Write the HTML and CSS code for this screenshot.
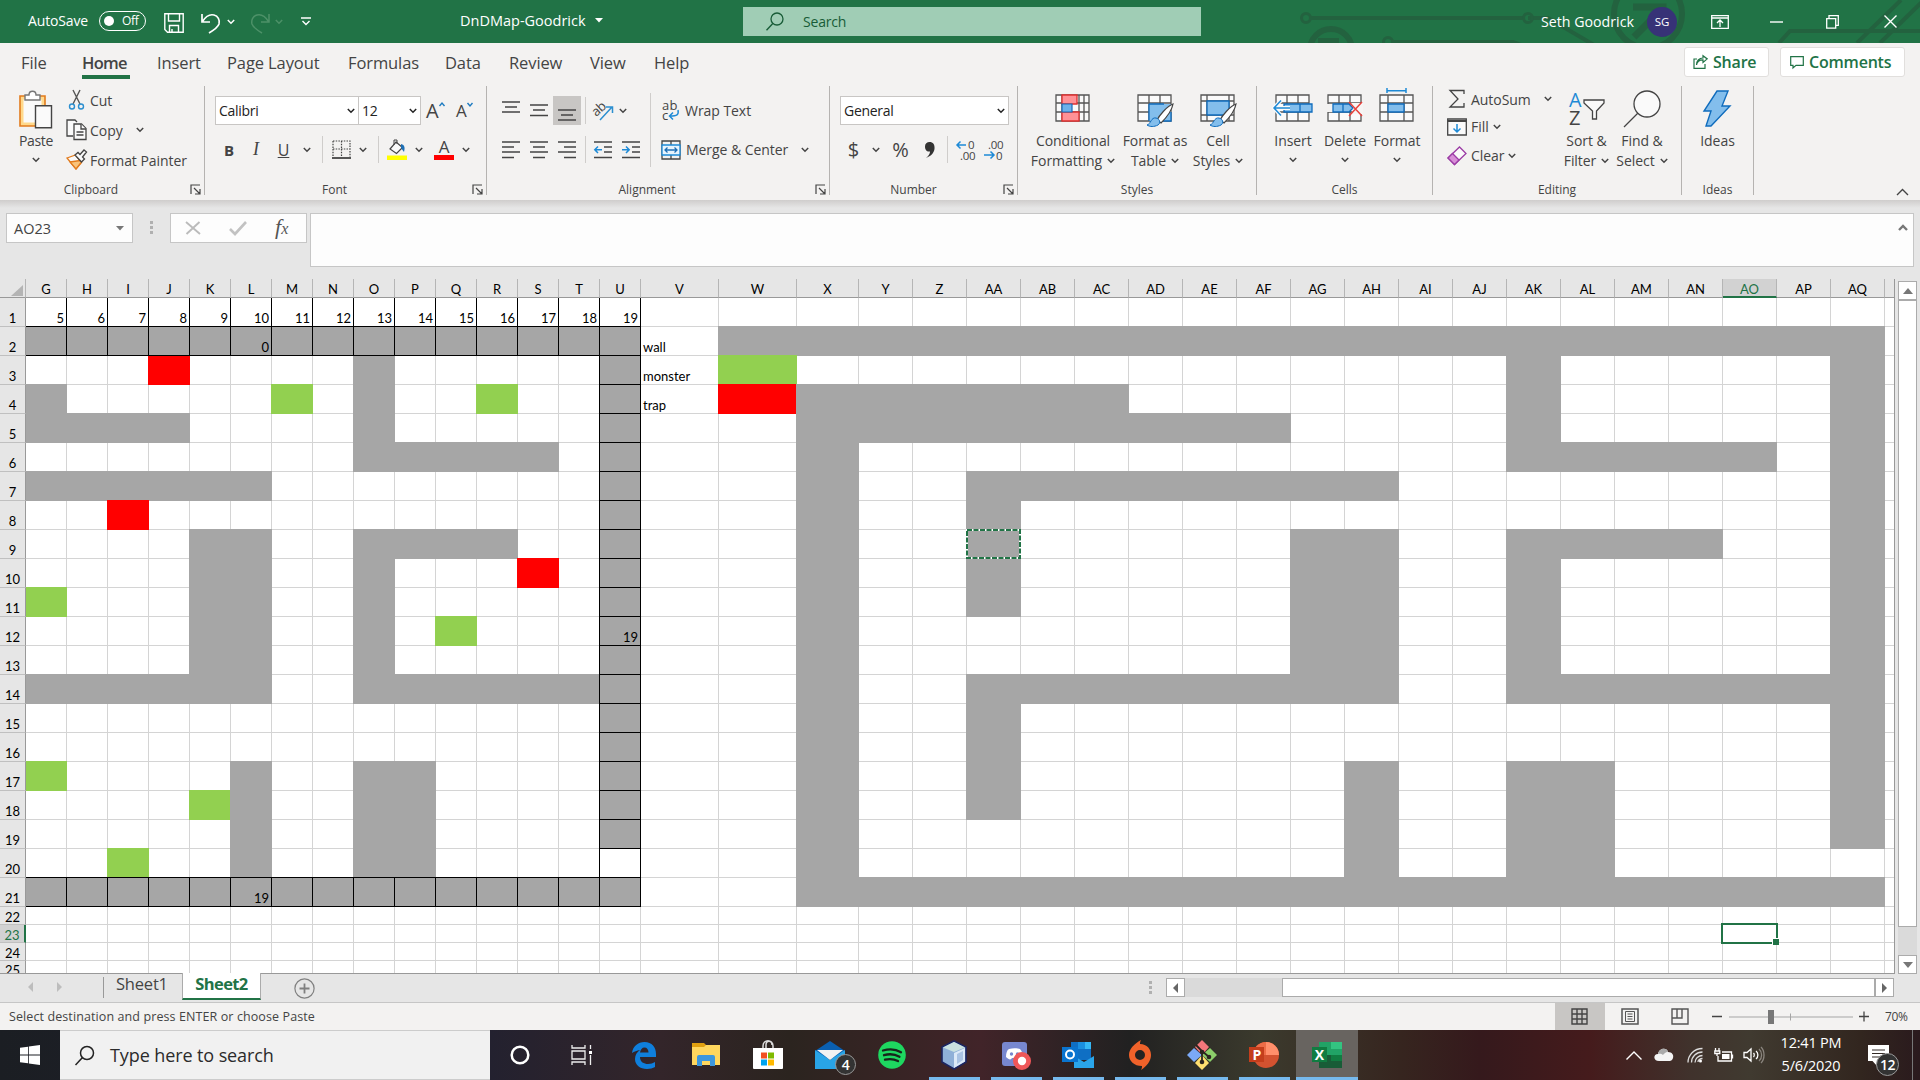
FILE: index.html
```html
<!DOCTYPE html>
<html lang="en">
<head>
<meta charset="utf-8">
<title>DnDMap-Goodrick</title>
<link rel="stylesheet" href="styles.css">
</head>
<body>
<svg class="sprite" width="0" height="0">
  <symbol id="chev" viewBox="0 0 8 6"><path d="M.8 1l3.200 3.200L7.200 1" fill="none" stroke="currentColor" stroke-width="1.500"/></symbol>
  <symbol id="launch" viewBox="0 0 11 11"><path d="M1 10V1h9M4 4l5.500 5.500M10 5v5H5" fill="none" stroke="#444" stroke-width="1.200"/></symbol>
</svg>

<header class="titlebar">
  <svg class="circuit" width="640" height="43" viewBox="1280 0 640 43" fill="none" stroke="#23623f" stroke-width="4">
    <circle cx="1306" cy="18" r="4.500" stroke-width="3"/><path d="M1311 18h212M1528 18h20l46 27"/><circle cx="1528" cy="18" r="4.500" stroke-width="3"/>
    <circle cx="1331" cy="50" r="21" stroke-width="6"/><path d="M1318 38h21v6h-21z" fill="#23623f" stroke="none"/>
    <circle cx="1388" cy="42" r="4.500" stroke-width="3"/><path d="M1393 42h120l8 3"/>
    <circle cx="1648" cy="14" r="34" stroke-width="6"/><path d="M1634 37l28-28M1633 7h30v30" stroke-width="7"/>
    <path d="M1779 43l11-12h130M1857 43l44-43M1880 43l44-43"/>
  </svg>
  <span class="autosave">AutoSave</span>
  <span class="toggle"><i></i>Off</span>
  <svg class="save" width="20" height="20" viewBox="0 0 20 20" fill="none" stroke="#fff" stroke-width="1.400"><path d="M.8.8h18.400v18.400H3.500L.8 16.500zM4.500 1v7h11V1M5.500 19v-6.500h9V19M8 19v-3"/></svg>
  <svg class="undo" width="20" height="21" viewBox="0 0 20 21" fill="none" stroke="#fff" stroke-width="1.700"><path d="M1 1v8h8M1.500 8.500C5 3 9 1 13 2s6 5 5 9c-1 3-5 6-10 9"/></svg>
  <svg class="c1" width="8" height="6"><use href="#chev"/></svg>
  <svg class="redo" width="20" height="21" viewBox="0 0 20 21" fill="none" stroke="#4d9168" stroke-width="1.500"><path d="M19 1v8h-8M18.500 8.500C15 3 11 1 7 2S1 7 2 11c1 3 5 6 10 9"/></svg>
  <svg class="c2" width="8" height="6"><use href="#chev"/></svg>
  <svg class="qat" width="10" height="9" viewBox="0 0 10 9" fill="none" stroke="#fff" stroke-width="1.400"><path d="M0 1h10M1.500 4L5 7.500 8.500 4"/></svg>
  <span class="doc">DnDMap-Goodrick</span>
  <svg class="tri" width="8" height="5"><path d="M0 0h8L4 4.500z" fill="#fff"/></svg>
  <div class="searchbox">
    <svg width="18" height="19" viewBox="0 0 18 19" fill="none" stroke="#185c37" stroke-width="1.300"><circle cx="11" cy="7" r="6"/><path d="M6.800 11.500L.5 18.300"/></svg>
    <span>Search</span>
  </div>
  <span class="user">Seth Goodrick</span>
  <span class="avatar">SG</span>
  <svg class="w1" width="18" height="14" viewBox="0 0 18 14" fill="none" stroke="#fff" stroke-width="1.300"><path d="M.7.7h16.600v12.600H.7zM.7 3h16.600M9 12V5.500M6 8l3-3 3 3"/></svg>
  <svg class="w2" width="13" height="2"><path d="M0 1h13" stroke="#fff" stroke-width="1.400"/></svg>
  <svg class="w3" width="13" height="14" viewBox="0 0 13 14" fill="none" stroke="#fff" stroke-width="1.300"><path d="M.7 3.700h9v9.500h-9zM3 3.500V.7h9.300v9.600H10"/></svg>
  <svg class="w4" width="13" height="13" viewBox="0 0 13 13"><path d="M.5.5l12 12M12.500.5l-12 12" stroke="#fff" stroke-width="1.400"/></svg>
</header>

<nav class="tabs">
  <div class="names"><span>File</span><span class="active">Home</span><span>Insert</span><span>Page Layout</span><span>Formulas</span><span>Data</span><span>Review</span><span>View</span><span>Help</span></div>
  <div class="share"><svg width="15" height="14" viewBox="0 0 15 14" fill="none" stroke="#217346" stroke-width="1.200"><path d="M4 4H1v9.400h11V9M3.500 10C4 6 7 4.800 10 4.800V7.500l4.200-3.600L10 .7v2.300C6 3 3.500 6 3.500 10z"/></svg>Share</div>
  <div class="comments"><svg width="14" height="13" viewBox="0 0 14 13" fill="none" stroke="#217346" stroke-width="1.200"><path d="M.7.7h12.600v8.600H6L3 12V9.300H.7z"/></svg>Comments</div>
</nav>

<section class="ribbon">
  <div class="group g-clip">
    <div class="clip-body">
      <div class="big">
        <svg width="36" height="39" viewBox="0 0 36 39"><path d="M2 6h25v30H2z" fill="#ffd98c" stroke="#e27b1d" stroke-width="1.600"/><path d="M5.500 9.500h18v23h-18z" fill="#fafafa"/><path d="M7 5h4c0-5 7-5 7 0h4v5H7z" fill="#fff" stroke="#777" stroke-width="1.400"/><path d="M17.500 15.700h16v22h-16z" fill="#fafafa" stroke="#444" stroke-width="1.400"/></svg>
        <span>Paste</span><svg width="8" height="6"><use href="#chev"/></svg>
      </div>
      <div class="clip-list">
        <div><svg width="22" height="22" viewBox="0 0 22 22" fill="none" stroke-width="1.400"><path d="M7 1l7 14M14 1L7 15" stroke="#555"/><circle cx="6" cy="17.500" r="2.500" stroke="#2b8fd0"/><circle cx="15" cy="17.500" r="2.500" stroke="#2b8fd0"/></svg><span>Cut</span></div>
        <div><svg width="22" height="22" viewBox="0 0 22 22" fill="#fafafa" stroke="#444" stroke-width="1.300"><path d="M7 17H1V1h8l2 2"/><path d="M8 5h7.500l4.500 4.500V20.500H8z"/><path d="M15 5v5h5M10.500 13h7M10.500 16h7"/></svg><span>Copy</span><svg class="cv" width="8" height="6"><use href="#chev"/></svg></div>
        <div><svg width="22" height="22" viewBox="0 0 22 22" stroke-width="1.300"><path d="M1 9l8.500-3 6 7.500L10 20z" fill="#fafafa" stroke="#e27b1d"/><path d="M4 13l10-1.500L15.500 13 10 20z" fill="#f9c47c" stroke="#e27b1d"/><path d="M9 6l3-2.500 2 2L18 1l2.500 2-4 5 2 2-3 3z" fill="#fafafa" stroke="#444"/></svg><span>Format Painter</span></div>
      </div>
    </div>
    <footer>Clipboard<svg width="11" height="11"><use href="#launch"/></svg></footer>
  </div>

  <div class="group g-font">
    <div class="rows">
      <div class="r font1">
        <div class="combo">Calibri<svg width="8" height="6"><use href="#chev"/></svg></div>
        <div class="combo">12<svg width="8" height="6"><use href="#chev"/></svg></div>
        <div class="sizer big-a">A<svg width="6" height="5" viewBox="0 0 6 5"><path d="M.5 4L3 1l2.500 3" fill="none" stroke="#1e7bc0" stroke-width="1.400"/></svg></div>
        <div class="sizer">A<svg width="6" height="5" viewBox="0 0 6 5"><path d="M.5 1L3 4l2.500-3" fill="none" stroke="#1e7bc0" stroke-width="1.400"/></svg></div>
      </div>
      <div class="r font2">
        <b>B</b><i class="it">I</i><u>U</u><svg width="8" height="6"><use href="#chev"/></svg><s class="sep"></s>
        <svg width="19" height="19" viewBox="0 0 19 19" fill="none" stroke="#444"><path d="M1 1h17v16M1 1v16M9.500 1v16M1 9h17" stroke-dasharray="1.500 1.200" stroke-width="1.200"/><path d="M0 18h19" stroke-width="1.800"/></svg>
        <svg width="8" height="6"><use href="#chev"/></svg><s class="sep"></s>
        <svg width="20" height="20" viewBox="0 0 20 20"><path d="M9 2l6.500 5.500-6 6L3 9z" fill="#fafafa" stroke="#444" stroke-width="1.200"/><path d="M7 5V0h3v4" fill="none" stroke="#444"/><path d="M14 4c4 1 4 4 3 8l-3-4z" fill="#1e6fb5"/><path d="M0 15.500h20v4.500H0z" fill="#ff0"/></svg>
        <svg width="8" height="6"><use href="#chev"/></svg>
        <div class="fcolor">A</div>
        <svg width="8" height="6"><use href="#chev"/></svg>
      </div>
    </div>
    <footer>Font<svg width="11" height="11"><use href="#launch"/></svg></footer>
  </div>

  <div class="group g-align">
    <div class="align-body">
      <div class="rows">
        <div class="r al1">
          <svg width="18" height="20" viewBox="0 0 18 20" stroke="#444" stroke-width="1.300"><path d="M0 1h18M3 6h12M0 11h18"/></svg>
          <svg width="18" height="20" viewBox="0 0 18 20" stroke="#444" stroke-width="1.300"><path d="M0 4h18M3 9h12M0 14.500h18"/></svg>
          <span class="pressed"><svg width="18" height="20" viewBox="0 0 18 20" stroke="#444" stroke-width="1.300"><path d="M0 9h18M3 14h12M0 19h18"/></svg></span>
          <s class="sep"></s>
          <svg class="txt" width="22" height="22" viewBox="0 0 22 22"><text x="0" y="14" transform="rotate(-42 6 10)" font-size="13">ab</text><path d="M8 20L20 7M14 7h6.500v6" fill="none" stroke="#2b8fd0" stroke-width="1.500"/></svg>
          <svg width="8" height="6"><use href="#chev"/></svg>
        </div>
        <div class="r al2">
          <svg width="18" height="18" viewBox="0 0 18 18" stroke="#444" stroke-width="1.300"><path d="M0 1h18M0 6h12M0 11h18M0 16.500h12"/></svg>
          <svg width="18" height="18" viewBox="0 0 18 18" stroke="#444" stroke-width="1.300"><path d="M0 1h18M3 6h12M0 11h18M3 16.500h12"/></svg>
          <svg width="18" height="18" viewBox="0 0 18 18" stroke="#444" stroke-width="1.300"><path d="M0 1h18M6 6h12M0 11h18M6 16.500h12"/></svg>
          <s class="sep"></s>
          <svg width="18" height="18" viewBox="0 0 18 18" fill="none" stroke="#444" stroke-width="1.300"><path d="M0 1h18M10 6h8M10 11h8M0 16.500h18"/><path d="M8 8.700H.5M4 5.500L.8 8.700 4 12" stroke="#1e8ad6" stroke-width="1.500"/></svg>
          <svg width="18" height="18" viewBox="0 0 18 18" fill="none" stroke="#444" stroke-width="1.300"><path d="M0 1h18M10 6h8M10 11h8M0 16.500h18"/><path d="M0 8.700h7.500M4 5.500l3.200 3.200L4 12" stroke="#1e8ad6" stroke-width="1.500"/></svg>
        </div>
      </div>
      <s class="sep tall"></s>
      <div class="rows">
        <div class="r wrap"><svg class="txt" width="19" height="22" viewBox="0 0 19 22"><text x="1" y="10" font-size="13" textLength="15">ab</text><text x="1" y="20" font-size="13">c</text><path d="M17 10c1 5-1 6-8 6M12 12.500L8.500 16l3.500 3.500" fill="none" stroke="#1e8ad6" stroke-width="1.500"/></svg><span>Wrap Text</span></div>
        <div class="r wrap"><svg width="20" height="20" viewBox="0 0 20 20" fill="none" stroke="#444" stroke-width="1.300"><path d="M1 1h18v18H1zM10 1v4M10 15v4"/><path d="M1 5h18v10H1z" fill="#e8f4fd" stroke="#1e8ad6"/><path d="M4 10h12M6.500 7.500L4 10l2.500 2.500M13.500 7.500L16 10l-2.500 2.500" stroke="#1e6fb5"/></svg><span>Merge &amp; Center</span><svg class="cv" width="8" height="6"><use href="#chev"/></svg></div>
      </div>
    </div>
    <footer>Alignment<svg width="11" height="11"><use href="#launch"/></svg></footer>
  </div>

  <div class="group g-num">
    <div class="rows">
      <div class="r"><div class="combo gen">General<svg width="8" height="6"><use href="#chev"/></svg></div></div>
      <div class="r num2">
        <span class="sym">$</span><svg width="8" height="6"><use href="#chev"/></svg><span class="sym">%</span>
        <svg width="12" height="18" viewBox="0 0 12 18"><path d="M5.500 1C9 1 11 3.500 10.500 8S6 15.500 2 17c3-2.500 4-4.500 4-6.500C2.500 11 1 8.500 1 5.500S3 1 5.500 1z" fill="#333"/></svg>
        <s class="sep"></s>
        <svg class="txt" width="20" height="22" viewBox="0 0 20 22"><text x="12" y="10" font-size="11.500">0</text><text x="4" y="20.500" font-size="11.500" textLength="15">.00</text><path d="M10 6H1M4.500 2.500L1 6l3.500 3.500" fill="none" stroke="#1e8ad6" stroke-width="1.500"/></svg>
        <svg class="txt" width="20" height="22" viewBox="0 0 20 22"><text x="4" y="10" font-size="11.500" textLength="15">.00</text><text x="12" y="20.500" font-size="11.500">0</text><path d="M0 16h9.500M6.500 12.500L10 16l-3.500 3.500" fill="none" stroke="#1e8ad6" stroke-width="1.500"/></svg>
      </div>
    </div>
    <footer>Number<svg width="11" height="11"><use href="#launch"/></svg></footer>
  </div>

  <div class="group g-styles">
    <div class="bigs">
      <div class="big">
        <svg width="40" height="39" viewBox="0 0 40 39"><path d="M3 5h33v26H3zM3 13h33M3 22h33M9 5v26M26 5v26M31 5v26" fill="#fafafa" stroke="#555" stroke-width="1.300"/><path d="M9 5h15v9H9zM9 22h17v9H9z" fill="#ff9196" stroke="#e03030" stroke-width="1.300"/><path d="M9 14h10v8H9z" fill="#6db1ea" stroke="#1a6cb8" stroke-width="1.200"/></svg>
        <span>Conditional</span><span>Formatting <svg width="8" height="6"><use href="#chev"/></svg></span>
      </div>
      <div class="big">
        <svg width="40" height="39" viewBox="0 0 40 39"><path d="M3 5h33v26H3zM3 13h33M3 22h33M14 5v26M25 5v26" fill="#fafafa" stroke="#555" stroke-width="1.300"/><path d="M14 14h22v17H14z" fill="#83beec"/><path d="M14 14v17M14 14h15M36 22v9h-9" fill="none" stroke="#0f6cbd" stroke-width="1.300"/><path d="M38 14c-6 2-14 12-16 16l4 3c5-5 11-13 12-19z" fill="#fff" stroke="#444" stroke-width="1.200"/><path d="M12 35c4-1 4-8 9-7 4 1 5 5 2 7-4 2-8 2-11 0z" fill="#83beec" stroke="#0f6cbd"/></svg>
        <span>Format as</span><span>Table <svg width="8" height="6"><use href="#chev"/></svg></span>
      </div>
      <div class="big">
        <svg width="40" height="39" viewBox="0 0 40 39"><path d="M3 5h33v26H3zM3 11h33M3 25h33M9 5v26M31 5v26" fill="#fafafa" stroke="#555" stroke-width="1.300"/><path d="M9 11h22v14H9z" fill="#83beec" stroke="#0f6cbd" stroke-width="1.300"/><path d="M38 14c-6 2-14 12-16 16l4 3c5-5 11-13 12-19z" fill="#fff" stroke="#444" stroke-width="1.200"/><path d="M12 35c4-1 4-8 9-7 4 1 5 5 2 7-4 2-8 2-11 0z" fill="#83beec" stroke="#0f6cbd"/></svg>
        <span>Cell</span><span>Styles <svg width="8" height="6"><use href="#chev"/></svg></span>
      </div>
    </div>
    <footer>Styles</footer>
  </div>

  <div class="group g-cells">
    <div class="bigs">
      <div class="big">
        <svg width="42" height="39" viewBox="0 0 42 39"><path d="M4 5h33v26H4zM4 13h33M4 22h33M15 5v26M26 5v26" fill="#fafafa" stroke="#555" stroke-width="1.300"/><path d="M12 14h28v8H12zM28 14v8" fill="#83beec" stroke="#0f6cbd" stroke-width="1.300"/><path d="M18 18H3M9 10.500L2 18l7 7.500" fill="none" stroke="#fafafa" stroke-width="4"/><path d="M18 18H2M9 10.500L2 18l7 7.500" fill="none" stroke="#1e8ad6" stroke-width="1.500"/></svg>
        <span>Insert</span><svg width="8" height="6"><use href="#chev"/></svg>
      </div>
      <div class="big">
        <svg width="42" height="39" viewBox="0 0 42 39"><path d="M4 5h33v26H4zM4 13h33M4 22h33M15 5v26M26 5v26" fill="#fafafa" stroke="#555" stroke-width="1.300"/><path d="M2 14h7v8H2z" fill="#f3f2f1"/><path d="M9 14h16l4 4-4 4H9zM19 14v8" fill="#83beec" stroke="#0f6cbd" stroke-width="1.300"/><path d="M27 13h12v11H27l3-6z" fill="#f6f5f4"/><path d="M25 12l13 14M38 12L25 26" stroke="#e8413b" stroke-width="1.500"/></svg>
        <span>Delete</span><svg width="8" height="6"><use href="#chev"/></svg>
      </div>
      <div class="big">
        <svg width="42" height="39" viewBox="0 0 42 39"><path d="M4 5h33v26H4zM4 13h33M4 22h33M12 5v26M28 5v26" fill="#fafafa" stroke="#555" stroke-width="1.300"/><path d="M12 14h16v8H12z" fill="#83beec" stroke="#0f6cbd" stroke-width="1.300"/><path d="M11 .7h19M11-2v5M30-2v5" stroke="#1e8ad6" stroke-width="1.500"/></svg>
        <span>Format</span><svg width="8" height="6"><use href="#chev"/></svg>
      </div>
    </div>
    <footer>Cells</footer>
  </div>

  <div class="group g-edit">
    <div class="edit-body">
      <div class="edit-list">
        <div><svg width="20" height="20" viewBox="0 0 20 20" fill="none" stroke="#444" stroke-width="1.300"><path d="M17 5V1.500H3l8 8.500-8 8h14V14"/></svg><span>AutoSum</span><svg class="cv far" width="8" height="6"><use href="#chev"/></svg></div>
        <div><svg width="20" height="20" viewBox="0 0 20 20" fill="none" stroke="#444" stroke-width="1.300"><path d="M.7 2h18.600v16H.7z" fill="#fafafa"/><path d="M.7 4h18.600" stroke-width="2"/><path d="M10 7v8M6.500 11.500L10 15l3.500-3.500" stroke="#1e8ad6" stroke-width="1.500"/></svg><span>Fill</span><svg class="cv" width="8" height="6"><use href="#chev"/></svg></div>
        <div><svg width="20" height="20" viewBox="0 0 20 20" stroke="#9b3ca5" stroke-width="1.300"><path d="M1 12L12.500 1l6.500 6.500L7.500 18.500z" fill="#fafafa"/><path d="M1 12l4.500-4.500L12 14l-4.500 4.500z" fill="#d88fd8"/></svg><span>Clear</span><svg class="cv" width="8" height="6"><use href="#chev"/></svg></div>
      </div>
      <div class="big">
        <svg class="txt" width="37" height="39" viewBox="0 0 37 39"><text x="1" y="17" font-size="20" textLength="12" lengthAdjust="spacingAndGlyphs" class="blue">A</text><text x="1" y="35" font-size="20" textLength="11" lengthAdjust="spacingAndGlyphs">Z</text><path d="M16 10h20v3l-7.500 8v8h-4v-8L16 13z" fill="#fafafa" stroke="#444" stroke-width="1.300"/></svg>
        <span>Sort &amp;</span><span>Filter <svg width="8" height="6"><use href="#chev"/></svg></span>
      </div>
      <div class="big">
        <svg width="39" height="39" viewBox="0 0 39 39" fill="#fafafa" stroke="#444" stroke-width="1.300"><circle cx="24" cy="14" r="13"/><path d="M15 23L1 37"/></svg>
        <span>Find &amp;</span><span>Select <svg width="8" height="6"><use href="#chev"/></svg></span>
      </div>
    </div>
    <footer>Editing</footer>
  </div>

  <div class="group g-ideas">
    <div class="bigs"><div class="big">
      <svg width="30" height="39" viewBox="0 0 30 39"><path d="M15 1h11l-6 15h8L9 36H4l5-15H2z" fill="#83beec" stroke="#0f6cbd" stroke-width="1.400"/></svg>
      <span>Ideas</span>
    </div></div>
    <footer>Ideas</footer>
  </div>
  <svg class="collapse" width="13" height="8" viewBox="0 0 13 8"><path d="M1 7l5.500-5.500L12 7" fill="none" stroke="#444" stroke-width="1.400"/></svg>
</section>

<section class="formula">
  <div class="namebox">AO23<svg width="8" height="5"><path d="M0 0h8L4 4.500z" fill="#777"/></svg></div>
  <div class="dots"><i></i><i></i><i></i></div>
  <div class="fxbox">
    <svg width="16" height="14" viewBox="0 0 16 14"><path d="M1 1l14 12M14.500 1L1.500 13" stroke="#bbb" stroke-width="1.900"/></svg>
    <svg width="18" height="14" viewBox="0 0 18 14"><path d="M1 8l5 5L17 1" fill="none" stroke="#c2c2c2" stroke-width="2.600"/></svg>
    <em>f<small>x</small></em>
  </div>
  <div class="input"><svg width="10" height="7" viewBox="0 0 10 7"><path d="M1 6l4-4 4 4" fill="none" stroke="#777" stroke-width="2.400"/></svg></div>
</section>

<main class="work">
  <div class="sheet" id="sheet"></div>
  <div class="vscroll">
    <div class="btn"><svg width="10" height="6"><path d="M0 6h10L5 0z" fill="#777"/></svg></div>
    <div class="thumb"></div><div class="track"></div>
    <div class="btn"><svg width="10" height="6"><path d="M0 0h10L5 6z" fill="#777"/></svg></div>
  </div>
</main>

<section class="sheetbar">
  <svg class="nav1" width="5" height="10"><path d="M5 0v10L0 5z" fill="#bdbdbd"/></svg>
  <svg class="nav2" width="5" height="10"><path d="M0 0v10l5-5z" fill="#bdbdbd"/></svg>
  <s class="line"></s>
  <span class="s1">Sheet1</span>
  <span class="s2">Sheet2</span>
  <svg class="add" width="21" height="21" viewBox="0 0 21 21" fill="none" stroke="#808080"><circle cx="10.500" cy="10.500" r="9.600" stroke-width="1.200"/><path d="M10.500 5.500v10M5.500 10.500h10" stroke-width="1.800"/></svg>
  <div class="dots"><i></i><i></i><i></i></div>
  <div class="hscroll">
    <div class="btn"><svg width="5" height="10"><path d="M5 0v10L0 5z" fill="#666"/></svg></div>
    <div class="track"></div><div class="thumb"></div>
    <div class="btn"><svg width="5" height="10"><path d="M0 0v10l5-5z" fill="#666"/></svg></div>
  </div>
</section>

<section class="status">
  <span class="msg">Select destination and press ENTER or choose Paste</span>
  <div class="view on"><svg width="17" height="17" viewBox="0 0 17 17"><path d="M1 1h15v15H1zM1 6h15M1 11h15M6 1v15M11 1v15" fill="none" stroke="#444" stroke-width="1.400"/></svg></div>
  <div class="view"><svg width="18" height="17" viewBox="0 0 18 17" fill="none" stroke="#555"><path d="M1 1h16v15H1z" stroke-width="1.500"/><path d="M4.500 3.500h9v10h-9zM6.500 6h5M6.500 8.500h5M6.500 11h5"/></svg></div>
  <div class="view"><svg width="18" height="17" viewBox="0 0 18 17" fill="none" stroke="#555" stroke-width="1.400"><path d="M1 1h16v15H1zM1 10h10V1M6 1v9"/></svg></div>
  <svg class="zoom" width="158" height="16" viewBox="0 0 158 16"><path d="M0 7.500h10M147 7.500h10M152 2.500v10" stroke="#444" stroke-width="1.300"/><path d="M17 8h124M78.500 4.500v7" stroke="#a5a5a5"/><path d="M56 1h6v14h-6z" fill="#777"/></svg>
  <span class="pct">70%</span>
</section>

<section class="taskbar">
  <div class="start"><svg width="20" height="20" viewBox="0 0 20 20" fill="#fff"><path d="M0 2.800L8 1.700v7.800H0zM8.800 1.500L20 0v9.500H8.800zM0 10.400h8v7.900L0 17.200zM8.800 10.400H20V20L8.800 18.400z"/></svg></div>
  <div class="find"><svg width="22" height="21" viewBox="0 0 22 21" fill="none" stroke="#222" stroke-width="1.500"><circle cx="13" cy="8" r="6.500"/><path d="M8.500 12.500L1.500 20"/></svg><span>Type here to search</span></div>
  <div class="apps">
    <div><svg width="22" height="22"><circle cx="11" cy="11" r="8.300" fill="none" stroke="#fff" stroke-width="2.500"/></svg></div>
    <div><svg width="22" height="20" viewBox="0 0 22 20" fill="none" stroke="#eee" stroke-width="1.300"><path d="M1 0v3h13V0M1 20v-3h13v3M1 6h13v8H1zM19.500 0v4M19.500 10v10"/><path d="M18 6h3v3h-3z" fill="#fff" stroke="none"/></svg></div>
    <div><svg width="26" height="28" viewBox="0 0 26 28"><path d="M1 12C2 5 7 1 13.500 1 21 1 25 6 25 13v3H9c0 5 4 7 8 7 3 0 5-.7 7-2v5c-2 1.200-5 2-8 2-7 0-12-4-12-10 0-4 2-7 5-9-3 .6-6 1.500-8 3zm8-.500h8.500c0-3-1.500-5-4-5s-4 2-4.500 5z" fill="#0f7fdc" fill-rule="evenodd"/></svg></div>
    <div><svg width="28" height="26" viewBox="0 0 28 26"><path d="M0 3h28v20H0z" fill="#ffd75e"/><path d="M0 1h12l2 2-2 2H0z" fill="#e0a010"/><path d="M5 15q0-2 2-2h14q2 0 2 2v9h-5v-5h-8v5H5z" fill="#3c97dd"/></svg></div>
    <div><svg width="30" height="30" viewBox="0 0 30 30"><path d="M10 9V6c0-7 10-7 10 0v3M13 9V5c0-5 6-5 6 0" fill="none" stroke="#ddd" stroke-width="1.500"/><path d="M0 8h30v20q0 1-1 1H1q-1 0-1-1z" fill="#fff"/><path d="M8 12.500h6v6H8z" fill="#f25022"/><path d="M15 12.500h6v6h-6z" fill="#7fba00"/><path d="M8 19.500h6v6H8z" fill="#00a4ef"/><path d="M15 19.500h6v6h-6z" fill="#ffb900"/></svg></div>
    <div class="mail"><svg width="30" height="28" viewBox="0 0 30 28"><path d="M0 10L15 0l15 10v8H0z" fill="#0a5fb0"/><path d="M0 9v19h30V9L15 19z" fill="#29a4e6"/><path d="M2 9h26L15 19z" fill="#f2f2f2"/></svg><span class="count">4</span></div>
    <div><svg width="28" height="28" viewBox="0 0 28 28"><circle cx="14" cy="14" r="13.800" fill="#1ed760"/><path d="M5 9.500c6-1.800 13-1.300 18 1.700M6 14.200c5-1.500 11-1 15.500 1.500M7 18.700c5-1.200 9-.7 13 1.400" fill="none" stroke="#17251b" stroke-width="2.300" stroke-linecap="round"/></svg></div>
    <div class="open"><svg width="30" height="30" viewBox="0 0 30 30"><path d="M15 1l12 6v15l-12 7L3 22V7z" fill="#8fb0d8" stroke="#1c2560" stroke-width="1.600"/><path d="M15 2l11 5.500L15 12 4 7.500z" fill="#c9e1e0"/><path d="M15 13l11-5v13.500L15 28z" fill="#dbe9f8"/><path d="M18 14l6-3v9l-6 4z" fill="#a9c3e4"/></svg></div>
    <div class="open"><svg width="30" height="30" viewBox="0 0 30 30"><rect x="1" y="2" width="25" height="24" rx="3" fill="#7787cf"/><path d="M5 17c0-4 1-7 3-8 4-1 7-1 11 0 2 2 3 5 3 9-4 3-5 2-6 0h-5c-1 2-3 2-6-1z" fill="#fff"/><circle cx="10.500" cy="14" r="1.700" fill="#7787cf"/><circle cx="16.500" cy="14" r="1.700" fill="#7787cf"/><circle cx="21" cy="21" r="9" fill="#ef5658"/><circle cx="21" cy="21" r="4.200" fill="#fff"/></svg></div>
    <div class="open"><svg width="32" height="28" viewBox="0 0 32 28"><path d="M9 1h20v18H9z" fill="#0f6fc4"/><path d="M16 1h7v7h-7z" fill="#1a8fe0"/><path d="M23 1h6v7h-6z" fill="#36b8f5"/><path d="M12 27V15l10 6 10-6v12z" fill="#2aa5ea"/><path d="M0 6h16v15H0z" fill="#0a74cf"/><circle cx="8" cy="13.500" r="4" fill="none" stroke="#fff" stroke-width="2"/></svg></div>
    <div class="open"><svg width="24" height="30" viewBox="0 0 24 30"><path d="M13 0c-1 2-1 3-1 4 7 0 11 5 11 11s-4 11-10 15c1-2 1-3 1-4C6 26 1 21 1 15S6 4 13 0zm-1 10a5 5 0 100 10 5 5 0 000-10z" fill="#f0622a" fill-rule="evenodd"/></svg></div>
    <div class="open"><svg width="30" height="30" viewBox="0 0 30 30"><path d="M15 0l7 7-7 8-7-8z" fill="#f4777b"/><path d="M23 8l7 7-7 7-8-7z" fill="#8ccf6a"/><path d="M15 15l7 8-7 7-7-7z" fill="#ffdf6f"/><path d="M7 8l8 7-8 7-7-7z" fill="#7ba9f7"/><path d="M9 5l6 6v11M15 11l7 6" fill="none" stroke="#2b2420" stroke-width="1.800"/><circle cx="15" cy="22" r="2.300" fill="#2b2420"/><circle cx="15" cy="12" r="2.300" fill="#2b2420"/><circle cx="22" cy="17" r="2.300" fill="#2b2420"/></svg></div>
    <div class="open"><svg width="30" height="28" viewBox="0 0 30 28"><circle cx="17" cy="14" r="13" fill="#d35230"/><path d="M17 1a13 13 0 0113 13H17z" fill="#ff8f6b"/><path d="M17 1v13H4A13 13 0 0117 1z" fill="#ed6c47"/><path d="M0 6h15v15H0z" fill="#c43e1c"/><text x="3.500" y="18.500" font-size="14" font-weight="700" fill="#fff">P</text></svg></div>
    <div class="open current"><svg width="30" height="28" viewBox="0 0 30 28"><path d="M7 1h23v26H7z" fill="#21a366"/><path d="M19 1h11v7H19z" fill="#33c481"/><path d="M7 14h23v13H7z" fill="#185c37"/><path d="M19 14h11v6H19z" fill="#107c41"/><path d="M0 6h15v15H0z" fill="#107c41"/><text x="2.800" y="18.500" font-size="14" font-weight="700" fill="#fff">X</text></svg></div>
  </div>
  <div class="tray">
    <svg class="t1" width="16" height="9"><path d="M.5 8.500L8 1l7.500 7.500" fill="none" stroke="#fff" stroke-width="1.400"/></svg>
    <svg class="t2" width="20" height="14" viewBox="0 0 20 14"><path d="M5 13C-1 13-1 6 4 6 5 0 13-1 14 4c4 0 6 3 5 6s-3 3-4 3z" fill="#f4f4f4"/><path d="M4 6C5 0 13-1 14 4c-3 0-4 2-5 3-1-1-3-1.500-5-1z" fill="#aaa"/></svg>
    <svg class="t3" width="16" height="16" viewBox="0 0 16 16" fill="none" stroke="#ddd" stroke-width="1.300"><path d="M1 15.500C1 8 7 1.500 15.500 1.500M4.500 15.500c0-6 5-10.500 11-10.500M8 15.500c0-4 3.500-7 7.500-7M11 15c0-2 2-3.500 4.500-3.500"/><circle cx="13.500" cy="14" r="1.500" fill="#fff" stroke="none"/></svg>
    <svg class="t4" width="20" height="15" viewBox="0 0 20 15" fill="none" stroke="#fff" stroke-width="1.300"><path d="M4 8v5h13.500V4H8M18.500 6.500v4M1.500 0v3M5 0v3M.8 3h5v2.500H.8zM3 5v3"/><path d="M8 6h7.500v5H8z" fill="#fff" stroke="none"/></svg>
    <svg class="t5" width="22" height="18" viewBox="0 0 22 18" fill="none" stroke="#fff" stroke-width="1.300"><path d="M1 6.500h3L8 3v12L4 11.500H1zM10.500 7c1 1 1 3 0 4M13 5c2.500 2 2.500 6 0 8"/><path d="M16 3c3.500 3 3.500 9 0 12M18 1c4 4 4 12 0 16" stroke="#8a857e"/></svg>
    <div class="clock"><span>12:41 PM</span><span>5/6/2020</span></div>
    <div class="note"><svg width="21" height="21" viewBox="0 0 21 21"><path d="M0 0h21v16H9v5l-4.500-5H0z" fill="#fff"/><path d="M4 5h13M4 8.500h13M4 12h8" stroke="#332a26" stroke-width="1.200"/></svg><span class="count">12</span></div>
  </div>
</section>
<script src="sheet.js"></script>
</body>
</html>
```
FILE: styles.css
```css
* { box-sizing: border-box; }
body { margin: 0; width: 1920px; height: 1080px; overflow: hidden; display: flex; flex-direction: column; font-family: "Open Sans", "Noto Sans", sans-serif; font-size: 14px; color: #444; background: #e6e6e6; }
svg { display: block; flex: none; overflow: visible; }
.sprite { position: absolute; }
s { text-decoration: none; }
span { white-space: nowrap; }

/* title bar */
.titlebar { position: relative; height: 43px; flex: none; background: #217346; color: #fff; display: flex; align-items: center; overflow: hidden; }
.titlebar > * { position: relative; flex: none; }
.titlebar > .circuit { position: absolute; right: 0; top: 0; }
.autosave { margin-left: 28px; width: 71px; margin-bottom: 2px; letter-spacing: -.15px; }
.toggle { width: 47px; height: 20px; border: 1.500px solid #fff; border-radius: 10px; display: flex; align-items: center; gap: 8px; padding-left: 4px; font-size: 12px; margin-bottom: 2px; letter-spacing: -.3px; }
.toggle i { width: 10px; height: 10px; border-radius: 50%; background: #fff; }
.save { margin-left: 18px; margin-top: 3px; }
.undo { margin-left: 17px; margin-top: 3px; }
.c1 { margin-left: 6px; }
.redo { margin-left: 15px; margin-top: 3px; }
.c2 { margin-left: 5px; color: #4d9168; }
.qat { margin-left: 18px; }
.doc { margin-left: 149px; width: 135px; margin-bottom: 3px; font-size: 14.500px; }
.tri { margin-bottom: 2px; }
.searchbox { margin-left: 140px; width: 458px; height: 29px; background: #a0cdb5; color: #185c37; display: flex; align-items: center; padding-left: 23px; gap: 19px; letter-spacing: -.2px; }
.user { margin-left: 340px; width: 106px; font-size: 14.200px; }
.avatar { width: 30px; height: 30px; border-radius: 50%; background: #373277; font-size: 11.500px; text-align: center; line-height: 30px; }
.w1 { margin-left: 34px; } .w2 { margin-left: 41px; } .w3 { margin-left: 43px; } .w4 { margin-left: 45px; }

/* ribbon tabs */
.tabs { height: 41px; flex: none; background: #f3f2f1; display: flex; align-items: flex-start; padding: 4px 0 0 21px; }
.names { display: grid; grid-template-columns: 61px 75px 70px 121px 97px 64px 81px 64px 60px; font-size: 16.500px; letter-spacing: -.1px; }
.names span { line-height: 31px; height: 32px; }
.names .active { font-weight: 600; border-bottom: 4px solid #217346; width: 48px; letter-spacing: -.7px; }
.share, .comments { height: 30px; background: #fff; border: 1px solid #e1dfdd; border-radius: 3px; color: #217346; font-weight: 600; font-size: 16px; letter-spacing: -.2px; display: flex; align-items: center; gap: 5px; padding-left: 8px; }
.share { margin-left: auto; width: 85px; }
.comments { margin: 0 15px 0 11px; width: 125px; padding-left: 9px; }

/* ribbon */
.ribbon { position: relative; height: 116px; flex: none; background: #f3f2f1; display: flex; align-items: flex-start; padding-top: 2px; letter-spacing: -.05px; }
.group { height: 109px; border-right: 1px solid #b5b3b1; display: flex; flex-direction: column; }
.group footer { margin-top: auto; height: 11px; line-height: 12px; font-size: 12px; letter-spacing: 0; display: flex; justify-content: center; position: relative; }
.group footer svg { position: absolute; right: 3px; bottom: 0; }
.g-clip { width: 205px; } .g-clip footer { padding-right: 22px; }
.g-font { width: 282px; } .g-font footer { padding-right: 22px; }
.g-align { width: 343px; } .g-align footer { padding-right: 22px; }
.g-num { width: 188px; } .g-num footer { padding-right: 20px; }
.g-styles { width: 239px; } .g-cells { width: 176px; } .g-edit { width: 249px; } .g-ideas { width: 72px; }
.collapse { position: absolute; right: 11px; bottom: 4px; }

.big { display: flex; flex-direction: column; align-items: center; line-height: 20px; }
.big > svg:first-child { margin: 4px 0 2px; }
.big > svg:last-child { margin-top: 6px; }
.big span { display: flex; align-items: center; gap: 5px; height: 20px; }
.clip-body { display: flex; }
.clip-body .big { width: 50px; margin-left: 11px; letter-spacing: -.3px; }
.clip-list { margin: -1px 0 0 5px; display: grid; grid-template-rows: repeat(3, 30px); }
.clip-list div { display: flex; align-items: center; gap: 2px; }
.clip-list .cv { margin-left: 11px; }

.rows { display: grid; grid-template-rows: 29px 29px; row-gap: 10px; padding-top: 10px; height: 92px; align-content: start; }
.r { display: grid; align-items: center; height: 29px; }
.combo { height: 29px; background: #fff; border: 1px solid #c8c6c4; display: flex; align-items: center; justify-content: space-between; padding: 0 3px 0 3px; color: #222; letter-spacing: -.3px; }
.font1 { padding-left: 10px; grid-template-columns: 144px 62px 30px 30px; }
.font1 .combo + .combo { border-left: 0; }
.sizer { display: flex; padding-left: 5px; font-size: 20px; line-height: 22px; }
.sizer svg { margin: 2px 0 0 0; }
.sizer:last-child { font-size: 17px; }
.font2 { padding-left: 10px; grid-template-columns: 28px 26px 29px 18px 12px 26px 18px 13px 24px 20px 30px 14px; justify-items: center; }
.font2 b { font-size: 15px; } .it { font: italic 18px "Liberation Serif", serif; } .font2 u { font-size: 16px; }
.fcolor { width: 20px; height: 20px; border-bottom: 5px solid #f00; font-size: 17px; line-height: 13px; text-align: center; }
.sep { width: 1px; height: 27px; background: #cfcdcb; }
.align-body { display: flex; }
.al1, .al2 { padding-left: 10px; grid-template-columns: 28px 28px 28px 8px 28px 28px 20px; justify-items: center; width: 163px; }
.al1 { grid-template-columns: 28px 28px 28px 8px 28px 12px; }
.pressed { background: #c8c6c4; width: 28px; height: 29px; display: grid; place-items: center; }
.tall { height: 74px; margin-top: 7px; }
.wrap { display: flex; width: 178px; padding-left: 10px; gap: 5px; }
.wrap .cv { margin-left: 8px; }
.gen { width: 169px; margin-left: 10px; }
.num2 { padding-left: 10px; grid-template-columns: 27px 18px 31px 27px 9px 27px 29px; justify-items: center; }
.sym { font-size: 20px; line-height: 22px; }
.txt text { fill: #444; letter-spacing: -.5px; } .txt .blue { fill: #1e8ad6; }

.bigs { display: grid; justify-content: center; }
.bigs .big { min-width: 0; }
.g-styles .bigs { grid-template-columns: 90px 74px 52px; justify-content: start; padding-left: 10px; }
.g-cells .bigs { grid-template-columns: 52px 52px 52px; justify-content: start; padding-left: 10px; }
.edit-body { display: flex; }
.edit-list { margin-left: 14px; width: 112px; display: grid; grid-template-rows: 26px 29px 29px; }
.edit-list div { display: flex; align-items: center; gap: 4px; }
.edit-list .far { margin-left: 9px; }
.edit-body .big { width: 55px; }
.edit-body .big + .big { width: 56px; }

/* formula bar */
.formula { height: 79px; flex: none; background: linear-gradient(#cfcdcc, #e6e6e6 8px); display: flex; padding: 13px 0 0 6px; }
.namebox, .fxbox { height: 30px; border: 1px solid #c6c6c6; background: #fdfdfd; display: flex; align-items: center; }
.namebox { width: 127px; justify-content: space-between; padding: 0 8px 0 7px; font-size: 14.500px; }
.dots { width: 3px; display: grid; gap: 2px; height: 13px; grid-template-rows: repeat(3, 3px); margin: 8px 17px 0 17px; }
.dots i { background: #b0b0b0; }
.fxbox { width: 137px; padding-left: 14px; }
.fxbox svg + svg { margin-left: 28px; }
.fxbox em { font: italic 22px/24px "Liberation Serif", serif; margin-left: 28px; color: #555; }
.fxbox small { font-size: 16px; }
.input { margin-left: 3px; width: 1604px; height: 54px; border: 1px solid #c6c6c6; background: #fdfdfd; display: flex; justify-content: flex-end; padding: 10px 5px; }

/* worksheet */
.work { height: 695px; flex: none; display: flex; }
.sheet { width: 1895px; height: 695px; overflow: hidden; display: grid; grid-template-columns: 26px repeat(15, 41px) 78px 78px 62px repeat(19, 54px) 10px; grid-template-rows: 19px repeat(21, 29px) repeat(3, 18px) 13px; border-bottom: 1px solid #999; border-right: 1px solid #999; background: #fff; font: 13px/14px Lato, "Open Sans", sans-serif; color: #000; position: relative; }
.sheet > * { display: flex; align-items: flex-end; overflow: hidden; }
.cell { border-right: 1px solid #d4d4d4; border-bottom: 1px solid #d4d4d4; padding: 0 2px 1px 2px; }
.num { justify-content: flex-end; }
.wall, .monster, .trap, .boxed { margin: -1px 0 0 -1px; }
.wall { background: #a6a6a6; border-color: #a6a6a6; }
.monster { background: #92d050; border-color: #92d050; }
.trap { background: #f00; border-color: #f00; }
.boxed { border: 1px solid #000; z-index: 1; }
.head { background: #e6e6e6; z-index: 2; justify-content: center; border-bottom: 1px solid #999; border-right: 1px solid #b5b5b5; padding-bottom: 1px; }
.corner { align-items: center !important; padding: 4px 0 0 8px; }
.side { background: #e6e6e6; z-index: 2; justify-content: center; border-right: 1px solid #999; border-bottom: 1px solid #c0c0c0; padding-bottom: 1px; }
.side.short { padding-bottom: 0; }
.side.last { align-items: flex-start; padding-top: 2px; border-bottom: 0; }
.sel { background: #d2d2d2; color: #217346; }
.head.sel { border-bottom: 2px solid #217346; padding-bottom: 0; }
.side.sel { border-right: 2px solid #217346; }
.sheet > .copied { overflow: visible; margin: -1px 0 0 -1px; z-index: 3; }
.sheet > .cursor { overflow: visible; margin: -2px -1px -1px -2px; border: 2px solid #217346; z-index: 3; position: relative; }
.cursor::after { content: ""; position: absolute; right: -3px; bottom: -3px; width: 6px; height: 6px; background: #217346; border: solid #fff; border-width: 1px 0 0 1px; }

.vscroll { width: 19px; margin: 2px 0 0 3px; display: flex; flex-direction: column; height: 693px; }
.vscroll .btn { height: 19px; border: 1px solid #ababab; background: #fff; display: grid; place-items: center; }
.vscroll .thumb { height: 627px; border: 1px solid #ababab; background: #fff; }
.vscroll .track { flex: 1; background: #dadada; }

/* sheet tabs */
.sheetbar { height: 29px; flex: none; display: flex; border-bottom: 1px solid #c6c6c6; letter-spacing: -.2px; }
.nav1 { margin: 8px 0 0 28px; } .nav2 { margin: 8px 0 0 24px; }
.line { width: 1px; height: 21px; margin: 3px 0 0 41px; background: #999; }
.s1 { margin-left: 12px; width: 66px; font-size: 16.500px; line-height: 20px; }
.s2 { width: 79px; height: 27px; margin-top: -1px; background: #fff; border: solid #ababab; border-width: 0 1px; border-bottom: 2px solid #217346; color: #217346; font-weight: 700; font-size: 16.500px; line-height: 22px; text-align: center; letter-spacing: -.6px; z-index: 1; }
.add { margin: 4px 0 0 33px; }
.sheetbar .dots { margin: 7px 14px 0 834px; }
.hscroll { display: flex; width: 728px; height: 19px; margin-top: 4px; }
.hscroll .btn { width: 19px; border: 1px solid #ababab; background: #fff; display: grid; place-items: center; }
.hscroll .track { width: 97px; background: #dadada; }
.hscroll .thumb { flex: 1; border: 1px solid #ababab; background: #fff; }

/* status bar */
.status { height: 27px; flex: none; background: #f3f2f1; display: flex; align-items: center; font-size: 12px; }
.msg { margin-left: 9px; width: 1546px; font-size: 12.500px; letter-spacing: .1px; }
.view { width: 50px; height: 27px; display: grid; place-items: center; padding-right: 1px; }
.on { background: #c8c6c4; }
.zoom { margin-left: 7px; }
.pct { margin-left: 15px; letter-spacing: -.3px; }

/* taskbar */
.taskbar { height: 50px; flex: none; display: flex; background: linear-gradient(90deg, #1b1e23 0, #23212f 490px, #33252a 660px, #2b241f 790px, #412429 980px, #212121 1130px, #3b3a2d 1260px, #36251f 1400px, #35191c 1480px, #451b1c 1590px, #40322c 1690px, #403a30 1750px, #32261f 1860px, #2a1a1d 1920px); color: #fff; }
.start { width: 60px; display: grid; place-items: center; }
.find { width: 430px; background: #f1f1f1; border: solid #ccc; border-width: 1px 0; display: flex; align-items: center; gap: 14px; padding-left: 14px; color: #2b2b2b; font-size: 18px; letter-spacing: -.1px; }
.find span { padding-bottom: 1px; }
.apps { display: grid; grid-template-columns: repeat(14, 62px); margin-left: -1px; }
.apps > div { display: grid; place-items: center; position: relative; }
.apps .open::after { content: ""; position: absolute; left: 6px; right: 5px; bottom: 0; height: 3px; background: #76b9ed; }
.apps .current { background: #686460; margin: 0 -1px 0 1px; }
.apps .current::after { left: 0; right: 0; }
.count { position: absolute; width: 21px; height: 21px; border-radius: 50%; background: #333; border: 1px solid #999; font-size: 14px; font-weight: 600; line-height: 19px; text-align: center; letter-spacing: -.5px; }
.mail .count { right: 5px; top: 24px; }
.tray { display: flex; align-items: center; margin-left: 269px; }
.t2 { margin-left: 12px; } .t3 { margin-left: 13px; } .t4 { margin-left: 11px; } .t5 { margin-left: 9px; }
.clock { margin-left: 16px; width: 60px; display: flex; flex-direction: column; align-items: center; line-height: 23px; font-size: 14.500px; letter-spacing: -.2px; padding-bottom: 2px; }
.note { position: relative; margin-left: 27px; width: 45px; border-right: 1px solid #777; height: 50px; padding-top: 15px; }
.note .count { left: 8px; top: 23px; width: 23px; height: 23px; line-height: 21px; }
```
FILE: sheet.js
```js
const letters = "ABCDEFGHIJKLMNOPQRSTUVWXYZ";
const name = n => (n > 26 ? letters[Math.floor((n - 1) / 26) - 1] : "") + letters[(n - 1) % 26];
const index = s => [...s].reduce((a, c) => a * 26 + letters.indexOf(c) + 1, 0);
const FIRST = 7, LAST = 44, ROWS = 25;

const walls = "G2:U2 W2:AQ2 G21:U21 X21:AQ21 U3:U19 G4 G5:J5 O3:O6 P6:S6 G7:L7 K9:L13 G14:L14 O9:R9 O10:O14 P14:T14 " +
  "L17:L20 O17:P20 X4:AC4 X5:AF5 X6:X20 AA7:AH7 AA8:AA11 AG9:AH13 AA14:AH14 AA15:AA18 AH17:AH20 " +
  "AK3:AK6 AL6:AO6 AK9:AN9 AK10:AK14 AL14:AQ14 AK17:AL20 AQ3:AQ19";
const fills = {
  wall: walls,
  monster: "M4 R4 G11 Q12 G17 K18 I20 W3",
  trap: "J3 I8 S10 W4",
  boxed: "G1:U1 G2:U2 U3:U20 G21:U21"
};
const texts = { L2: "0", U12: "19", L21: "19", V2: "wall", V3: "monster", V4: "trap" };
for (let i = 0; i < 15; i++) texts[name(FIRST + i) + "1"] = String(i + 5);

const classes = {};
for (const [kind, list] of Object.entries(fills))
  for (const range of list.split(" ")) {
    const [a, b] = range.split(":").map(r => r.match(/([A-Z]+)(\d+)/));
    const end = b || a;
    for (let c = index(a[1]); c <= index(end[1]); c++)
      for (let r = +a[2]; r <= +end[2]; r++)
        (classes[name(c) + r] ||= new Set()).add(kind);
  }

const sheet = document.getElementById("sheet");
function add(cls, col, row, text = "") {
  const el = document.createElement("div");
  el.className = cls;
  el.style.gridArea = `${row + 1} / ${col}`;
  el.textContent = text;
  sheet.append(el);
  return el;
}
add("head corner", 1, 0).innerHTML = '<svg width="12" height="11"><path d="M12 0v11H0z" fill="#b4b4b4"/></svg>';
for (let c = FIRST; c <= LAST; c++)
  add("head" + (name(c) === "AO" ? " sel" : ""), c - FIRST + 2, 0, c < LAST ? name(c) : "");
for (let r = 1; r <= ROWS; r++) {
  for (let c = FIRST; c <= LAST; c++) {
    const key = name(c) + r, text = texts[key] || "";
    add(["cell", ...(classes[key] || []), /^\d/.test(text) ? "num" : ""].join(" ").trim(), c - FIRST + 2, r, text);
  }
  add("side" + (r === 23 ? " sel" : "") + (r > 21 ? " short" : "") + (r === 25 ? " last" : ""), 1, r, String(r));
}
add("copied", index("AA") - FIRST + 2, 9).innerHTML =
  '<svg width="55" height="30" fill="none" stroke-width="2"><path d="M1 1h53v28H1z" stroke="#fff"/><path d="M1 1h53v28H1z" stroke="#217346" stroke-dasharray="5 1.500"/></svg>';
add("cursor", index("AO") - FIRST + 2, 23);
```
